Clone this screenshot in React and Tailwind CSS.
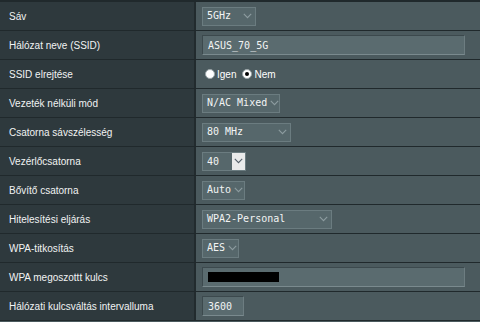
import React from "react";

const mono = { fontFamily: '"DejaVu Sans Mono", "Liberation Mono", monospace' };

function Chevron({ className = "" }) {
  return (
    <svg width="9" height="6" viewBox="0 0 9 6" className={`shrink-0 ${className}`}>
      <path d="M0.8 0.8 L4.5 4.6 L8.2 0.8" fill="none" stroke="currentColor" strokeWidth="1.1" />
    </svg>
  );
}

function Select({ value, w }) {
  return (
    <div
      className={`flex h-[19px] shrink-0 items-center justify-between gap-[3px] whitespace-nowrap border border-[#6b7c80] bg-[#56676b] pl-[4px] pr-[3px] text-[10px] text-[#f2f4f4] ${w}`}
      style={mono}
    >
      <span className="leading-none">{value}</span>
      <Chevron className="text-[#8d9ca0]" />
    </div>
  );
}

function Input({ children, w }) {
  return (
    <div
      className={`flex h-[20px] shrink-0 items-center whitespace-nowrap border border-[#3c494d] border-b-[#7a8a8e] border-r-[#6d7d81] bg-[#5a6b6f] pl-[5px] text-[10px] text-[#f2f4f4] ${w}`}
      style={mono}
    >
      {children}
    </div>
  );
}

function Radio({ checked, label }) {
  return (
    <label className="flex items-center gap-[2px]">
      <span className="flex h-[10px] w-[10px] items-center justify-center rounded-full border border-[#9aa5a8] bg-white">
        {checked && <span className="h-[4px] w-[4px] rounded-full bg-black" />}
      </span>
      <span className="text-[10px] text-white">{label}</span>
    </label>
  );
}

function Row({ label, children }) {
  return (
    <div className="flex h-[29px] border-b border-[#20292c]">
      <div className="flex w-[194px] shrink-0 items-center whitespace-nowrap bg-[#2e393d] pl-[9px] text-[10px] text-[#f1f3f3]">
        {label}
      </div>
      <div className="flex flex-1 items-center border-l-2 border-[#222b2e] bg-[#4b5a5e] pl-[6px]">
        {children}
      </div>
    </div>
  );
}

export default function App() {
  return (
    <div
      className="h-[322px] w-[480px] overflow-hidden border-t-2 border-[#20292c] bg-[#4b5a5e]"
      style={{ fontFamily: '"Liberation Sans", Arial, sans-serif' }}
    >
      <Row label="Sáv">
        <Select value="5GHz" w="w-[54px]" />
      </Row>
      <Row label="Hálózat neve (SSID)">
        <Input w="w-[263px]">ASUS_70_5G</Input>
      </Row>
      <Row label="SSID elrejtése">
        <div className="flex items-center gap-[6px] pl-[3px]">
          <Radio label="Igen" />
          <Radio checked label="Nem" />
        </div>
      </Row>
      <Row label="Vezeték nélküli mód">
        <Select value="N/AC Mixed" w="w-[78px]" />
      </Row>
      <Row label="Csatorna sávszélesség">
        <Select value="80 MHz" w="w-[89px]" />
      </Row>
      <Row label="Vezérlőcsatorna">
        <div className="flex h-[19px] items-stretch border border-[#6b7c80] bg-[#56676b] text-[10px] text-[#f2f4f4]" style={mono}>
          <span className="flex w-[29px] items-center pl-[4px]">40</span>
          <span className="flex w-[13px] items-center justify-center bg-[#e9eaea] text-[#55606a]">
            <Chevron />
          </span>
        </div>
      </Row>
      <Row label="Bővítő csatorna">
        <Select value="Auto" w="w-[43px]" />
      </Row>
      <Row label="Hitelesítési eljárás">
        <Select value="WPA2-Personal" w="w-[130px]" />
      </Row>
      <Row label="WPA-titkosítás">
        <Select value="AES" w="w-[37px]" />
      </Row>
      <Row label="WPA megoszottt kulcs">
        <Input w="w-[263px]">
          <span className="h-[10px] w-[71px] bg-black" />
        </Input>
      </Row>
      <Row label="Hálózati kulcsváltás intervalluma">
        <Input w="w-[42px]">3600</Input>
      </Row>
    </div>
  );
}
